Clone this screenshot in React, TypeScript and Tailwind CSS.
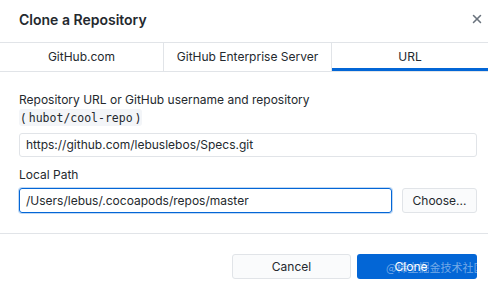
import { X } from "lucide-react"

const tabs = [
  { label: "GitHub.com", width: "w-[164px]" },
  { label: "GitHub Enterprise Server", width: "w-[168px]" },
  { label: "URL", width: "flex-1", active: true },
]

export default function App() {
  return (
    <div className="relative h-[291px] w-[488px] overflow-hidden bg-white font-['Inter',sans-serif] text-[#24292e]">
      <div className="flex h-[42px] items-center justify-between pb-[4px] pl-[19px] pr-[4px]">
        <h1 className="text-[14px] font-semibold">Clone a Repository</h1>
        <X className="h-[14px] w-[14px] text-[#6a737d]" strokeWidth={2.6} />
      </div>

      <div className="flex h-[30px] border-y border-[#e1e4e8]">
        {tabs.map((tab) => (
          <div
            key={tab.label}
            className={`relative flex items-center justify-center border-r border-[#e1e4e8] text-[12px] last:border-r-0 ${tab.width}`}
          >
            {tab.label}
            {tab.active && <div className="absolute inset-x-0 bottom-0 h-[3px] bg-[#0366d6]" />}
          </div>
        ))}
      </div>

      <div className="pl-[19px] pr-[11px] pt-[19px] pb-[20px] text-[12px]">
        <p className="leading-[18px]">Repository URL or GitHub username and repository</p>
        <p className="leading-[18px]">
          <span className="rounded-[3px] bg-[#f3f5f8] px-[2px] py-[1px]">
            ( <span className="font-['DejaVu_Sans_Mono',monospace] text-[11.5px]">hubot/cool-repo</span> )
          </span>
        </p>
        <div className="mt-[6px] flex h-[24px] items-center rounded-[3px] border border-[#e1e4e8] px-[6px]">
          https://github.com/lebuslebos/Specs.git
        </div>

        <p className="mt-[9px] leading-[18px]">Local Path</p>
        <div className="mt-[4px] flex gap-[10px]">
          <div className="flex h-[25px] flex-1 items-center rounded-[3px] border border-[#0366d6] px-[6px] shadow-[0_0_0_1px_rgba(3,102,214,0.25)]">
            /Users/lebus/.cocoapods/repos/master
          </div>
          <button className="h-[25px] w-[75px] rounded-[3px] border border-[#e1e4e8] bg-[#fafbfc] text-[12px] text-[#24292e]">
            Choose...
          </button>
        </div>
      </div>

      <div className="flex justify-end gap-[6px] border-t border-[#e1e4e8] px-[11px] pt-[20px]">
        <button className="h-[25px] w-[119px] rounded-[3px] border border-[#e1e4e8] bg-[#fafbfc] text-[12px] text-[#24292e]">
          Cancel
        </button>
        <button className="h-[25px] w-[120px] rounded-[3px] bg-[#0366d6] pr-[12px] text-[12px] text-white">
          Clone
        </button>
      </div>

      <span className="absolute left-[386px] top-[259px] font-['Noto_Sans_CJK_SC',sans-serif] text-[11px] text-white/45">
        @稀土掘金技术社区
      </span>
    </div>
  )
}
